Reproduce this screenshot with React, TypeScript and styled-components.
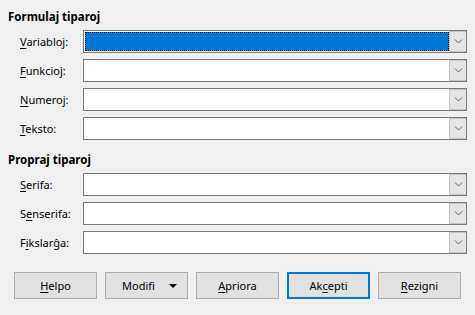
import styled, { createGlobalStyle } from "styled-components";

const GlobalStyle = createGlobalStyle`
  html, body {
    margin: 0;
    padding: 0;
    background: #f0f0f0;
  }
  body {
    font-family: "Noto Sans", "Liberation Sans", sans-serif;
    font-size: 11px;
    color: #000;
  }
`;

type Field = { label: string; key: number; selected?: boolean };

const typeFaces: Field[] = [
  { label: "Variabloj:", key: 0, selected: true },
  { label: "Funkcioj:", key: 0 },
  { label: "Numeroj:", key: 0 },
  { label: "Teksto:", key: 0 },
];

const customFonts: Field[] = [
  { label: "Serifa:", key: 0 },
  { label: "Senserifa:", key: 1 },
  { label: "Fikslarĝa:", key: 1 },
];

const buttons = [
  { label: "Helpo", key: 0 },
  { label: "Modifi", key: -1, menu: true },
  { label: "Apriora", key: 0 },
  { label: "Akcepti", key: 2, primary: true },
  { label: "Rezigni", key: 0 },
];

function Mnemonic({ text, index }: { text: string; index: number }) {
  if (index < 0) return <>{text}</>;
  return (
    <>
      {text.slice(0, index)}
      <u>{text[index]}</u>
      {text.slice(index + 1)}
    </>
  );
}

function Combo({ selected }: { selected?: boolean }) {
  return (
    <ComboBox>
      <ComboField $selected={selected} />
      <ComboButton>
        <svg width="9" height="5" viewBox="0 0 9 5">
          <path d="M1 0.5 L4.5 4 L8 0.5" fill="none" stroke="#606060" strokeWidth="1" />
        </svg>
      </ComboButton>
    </ComboBox>
  );
}

function FontSection({ title, fields }: { title: string; fields: Field[] }) {
  return (
    <Section>
      <SectionTitle>{title}</SectionTitle>
      <Rows>
        {fields.map((f) => (
          <Row key={f.label}>
            <Label>
              <Mnemonic text={f.label} index={f.key} />
            </Label>
            <Combo selected={f.selected} />
          </Row>
        ))}
      </Rows>
    </Section>
  );
}

export default function App() {
  return (
    <>
      <GlobalStyle />
      <Dialog>
        <FontSection title="Formulaj tiparoj" fields={typeFaces} />
        <FontSection title="Propraj tiparoj" fields={customFonts} />
        <ButtonBar>
          {buttons.map((b) => (
            <Button key={b.label} $primary={b.primary} $menu={b.menu}>
              <Mnemonic text={b.label} index={b.key} />
              {b.menu ? <MenuArrow /> : null}
            </Button>
          ))}
        </ButtonBar>
      </Dialog>
    </>
  );
}

const Dialog = styled.div`
  width: 475px;
  height: 315px;
  box-sizing: border-box;
  padding: 9px 8px 0 8px;
  display: flex;
  flex-direction: column;
`;

const Section = styled.section`
  display: flex;
  flex-direction: column;
  gap: 5px;
  & + & {
    margin-top: 12px;
  }
`;

const SectionTitle = styled.h2`
  margin: 0;
  font-size: 11.5px;
  font-weight: 700;
  line-height: 16px;
`;

const Rows = styled.div`
  display: flex;
  flex-direction: column;
  gap: 6px;
  padding-left: 12px;
`;

const Row = styled.div`
  display: grid;
  grid-template-columns: 63px 1fr;
  align-items: center;
`;

const Label = styled.span`
  white-space: nowrap;
  line-height: 16px;

  u {
    text-underline-offset: 2px;
  }
`;

const ComboBox = styled.div`
  height: 23px;
  box-sizing: border-box;
  border: 1px solid #7a7a7a;
  background: #fff;
  display: flex;
`;

const ComboField = styled.div<{ $selected?: boolean }>`
  flex: 1;
  box-sizing: border-box;
  margin: 1px 0 1px 1px;
  background: ${(p) => (p.$selected ? "#0078d7" : "#fff")};
  border: ${(p) => (p.$selected ? "1px dotted #000" : "1px solid transparent")};
`;

const ComboButton = styled.div`
  width: 17px;
  box-sizing: border-box;
  background: #e5e5e5;
  border: 1px solid #c4c4c4;
  border-right: none;
  display: flex;
  align-items: center;
  justify-content: center;
`;

const ButtonBar = styled.div`
  display: flex;
  gap: 8px;
  padding: 0 6px;
  margin-top: 18px;
`;

const Button = styled.button<{ $primary?: boolean; $menu?: boolean }>`
  width: 83px;
  height: 27px;
  box-sizing: border-box;
  background: #e1e1e1;
  border: 1px solid ${(p) => (p.$primary ? "#0078d7" : "#adadad")};
  box-shadow: ${(p) => (p.$primary ? "inset 0 0 0 1px #0078d7" : "none")};
  font-family: "Noto Sans", "Liberation Sans", sans-serif;
  font-size: 11px;
  color: #000;
  padding: ${(p) => (p.$menu ? "0 16px 0 0" : "0")};
  display: flex;
  align-items: center;
  justify-content: center;
  position: relative;

  u {
    text-underline-offset: 2px;
  }
`;

const MenuArrow = styled.span`
  position: absolute;
  right: 10px;
  top: 11px;
  width: 0;
  height: 0;
  border-left: 4px solid transparent;
  border-right: 4px solid transparent;
  border-top: 4px solid #000;
`;
